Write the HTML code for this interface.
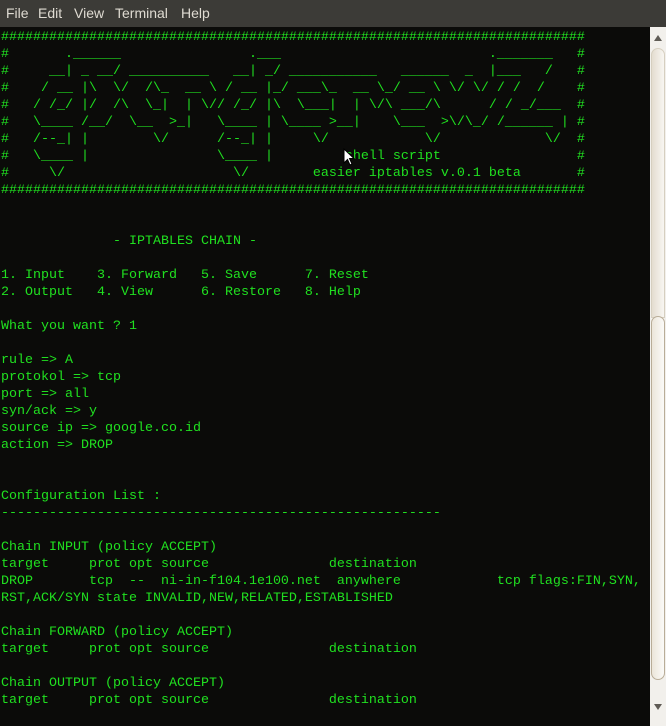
<!DOCTYPE html>
<html><head><meta charset="utf-8"><style>
html,body{margin:0;padding:0;width:666px;height:726px;overflow:hidden;background:#0b0b09;}
#menu{position:absolute;left:0;top:0;width:666px;height:27px;background:#3c3b37;font-family:"Liberation Sans","DejaVu Sans",sans-serif;font-size:14px;color:#dfdbd2;}
#menu span{position:absolute;top:5px;}
pre{position:absolute;left:1px;top:29px;margin:0;font-family:"Liberation Mono",monospace;font-size:13.33px;line-height:17px;color:#20e020;white-space:pre;}
#sb{position:absolute;left:650px;top:27px;width:16px;height:699px;background:#f2f0ec;}
#trough{position:absolute;left:1px;top:21px;width:14px;height:270px;background:linear-gradient(90deg,#e4ddd0,#f8f6f2);border-radius:7px 7px 0 0;border:1px solid #d6cfc0;box-sizing:border-box;}
#thumb{position:absolute;left:1px;top:289px;width:14px;height:364px;background:linear-gradient(90deg,#ece6da,#fbfaf8);border-radius:7px;border:1px solid #b9ad98;box-sizing:border-box;}
.arr{position:absolute;left:4px;width:0;height:0;border-left:4px solid transparent;border-right:4px solid transparent;}
</style></head><body>
<div id="menu"><span style="left:6px">File</span><span style="left:38px">Edit</span><span style="left:74px">View</span><span style="left:115px">Terminal</span><span style="left:181px">Help</span></div>
<pre>#########################################################################
#       .______                .___                          ._______   #
#     __| _ __/ __________   __| _/ ___________   ______  _  |___   /   #
#    / __ |\  \/  /\_  __ \ / __ |_/ ___\_  __ \_/ __ \ \/ \/ / /  /    #
#   / /_/ |/  /\  \_|  | \// /_/ |\  \___|  | \/\ ___/\      / / _/___  #
#   \____ /__/  \__  &gt;_|   \____ | \____ &gt;__|    \___  &gt;\/\_/ /______ | #
#   /--_| |        \/      /--_| |     \/            \/             \/  #
#   \____ |                \____ |         shell script                 #
#     \/                     \/        easier iptables v.0.1 beta       #
#########################################################################


              - IPTABLES CHAIN -

1. Input    3. Forward   5. Save      7. Reset
2. Output   4. View      6. Restore   8. Help

What you want ? 1

rule =&gt; A
protokol =&gt; tcp
port =&gt; all
syn/ack =&gt; y
source ip =&gt; google.co.id
action =&gt; DROP


Configuration List :
-------------------------------------------------------

Chain INPUT (policy ACCEPT)
target     prot opt source               destination
DROP       tcp  --  ni-in-f104.1e100.net  anywhere            tcp flags:FIN,SYN,
RST,ACK/SYN state INVALID,NEW,RELATED,ESTABLISHED

Chain FORWARD (policy ACCEPT)
target     prot opt source               destination

Chain OUTPUT (policy ACCEPT)
target     prot opt source               destination</pre>
<svg style="position:absolute;left:343px;top:148px" width="12" height="18" viewBox="0 0 12 18"><path d="M1 1 L1 15 L4.5 11.5 L7 17 L9 16 L6.5 10.5 L11 10.5 Z" fill="#fff" stroke="#000" stroke-width="1"/></svg>
<div id="sb">
<div class="arr" style="top:8px;border-bottom:6px solid #5f5b55;"></div>
<div id="trough"></div>
<div id="thumb"></div>
<div class="arr" style="top:677px;border-top:6px solid #5f5b55;"></div>
</div>
</body></html>
